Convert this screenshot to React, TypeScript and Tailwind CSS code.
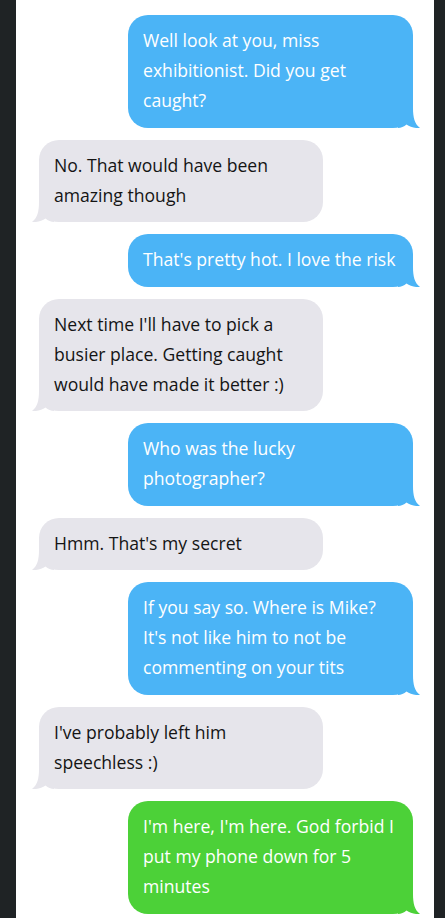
import React from "react"

type Msg = { from: "me" | "them"; text: string; color?: "blue" | "green" }

const messages: Msg[] = [
  { from: "me", text: "Well look at you, miss exhibitionist. Did you get caught?" },
  { from: "them", text: "No. That would have been amazing though" },
  { from: "me", text: "That's pretty hot. I love the risk" },
  { from: "them", text: "Next time I'll have to pick a busier place. Getting caught would have made it better :)" },
  { from: "me", text: "Who was the lucky photographer?" },
  { from: "them", text: "Hmm. That's my secret" },
  { from: "me", text: "If you say so. Where is Mike? It's not like him to not be commenting on your tits" },
  { from: "them", text: "I've probably left him speechless :)" },
  { from: "me", text: "I'm here, I'm here. God forbid I put my phone down for 5 minutes", color: "green" },
]

function Tail({ side, fill }: { side: "left" | "right"; fill: string }) {
  if (side === "right") {
    return (
      <svg className="absolute bottom-0 right-[-7px] h-[20px] w-[22px]" viewBox="0 0 22 20">
        <path d="M0 0 H15 C15 9 16.5 16 22 20 C17 20.5 12 19 8.5 16.5 C6 18.5 3 20 0 20 Z" fill={fill} />
      </svg>
    )
  }
  return (
    <svg className="absolute bottom-0 left-[-7px] h-[20px] w-[22px]" viewBox="0 0 22 20">
      <path d="M22 0 H7 C7 9 5.5 16 0 20 C5 20.5 10 19 13.5 16.5 C16 18.5 19 20 22 20 Z" fill={fill} />
    </svg>
  )
}

function Bubble({ msg }: { msg: Msg }) {
  const mine = msg.from === "me"
  const fill = mine ? (msg.color === "green" ? "#4cd138" : "#4bb4f6") : "#e6e5eb"
  return (
    <div className={mine ? "flex justify-end pr-[21px]" : "flex justify-start pl-[23px]"}>
      <div
        className={
          mine
            ? msg.color === "green"
              ? "relative w-[285px] rounded-[20px] bg-[#4cd138] pl-[15px] pr-[10px] pt-[10px] pb-[12.5px] text-white"
              : "relative w-[285px] rounded-[20px] bg-[#4bb4f6] pl-[15px] pr-[10px] pt-[10px] pb-[12.5px] text-white"
            : "relative w-[284px] rounded-[20px] bg-[#e6e5eb] pl-[15px] pr-[10px] pt-[10px] pb-[12.5px] text-[#141414]"
        }
      >
        <Tail side={mine ? "right" : "left"} fill={fill} />
        <p className="relative text-[17.6px] leading-[30px]">{msg.text}</p>
      </div>
    </div>
  )
}

export default function App() {
  return (
    <div className="flex h-[918px] w-[445px] overflow-hidden bg-[#1f2325] font-['Open_Sans',sans-serif]">
      <div className="w-[16px] shrink-0" />
      <div className="flex w-[418px] shrink-0 flex-col gap-[12px] bg-white pt-[15px]">
        {messages.map((m, i) => (
          <Bubble key={i} msg={m} />
        ))}
      </div>
    </div>
  )
}
